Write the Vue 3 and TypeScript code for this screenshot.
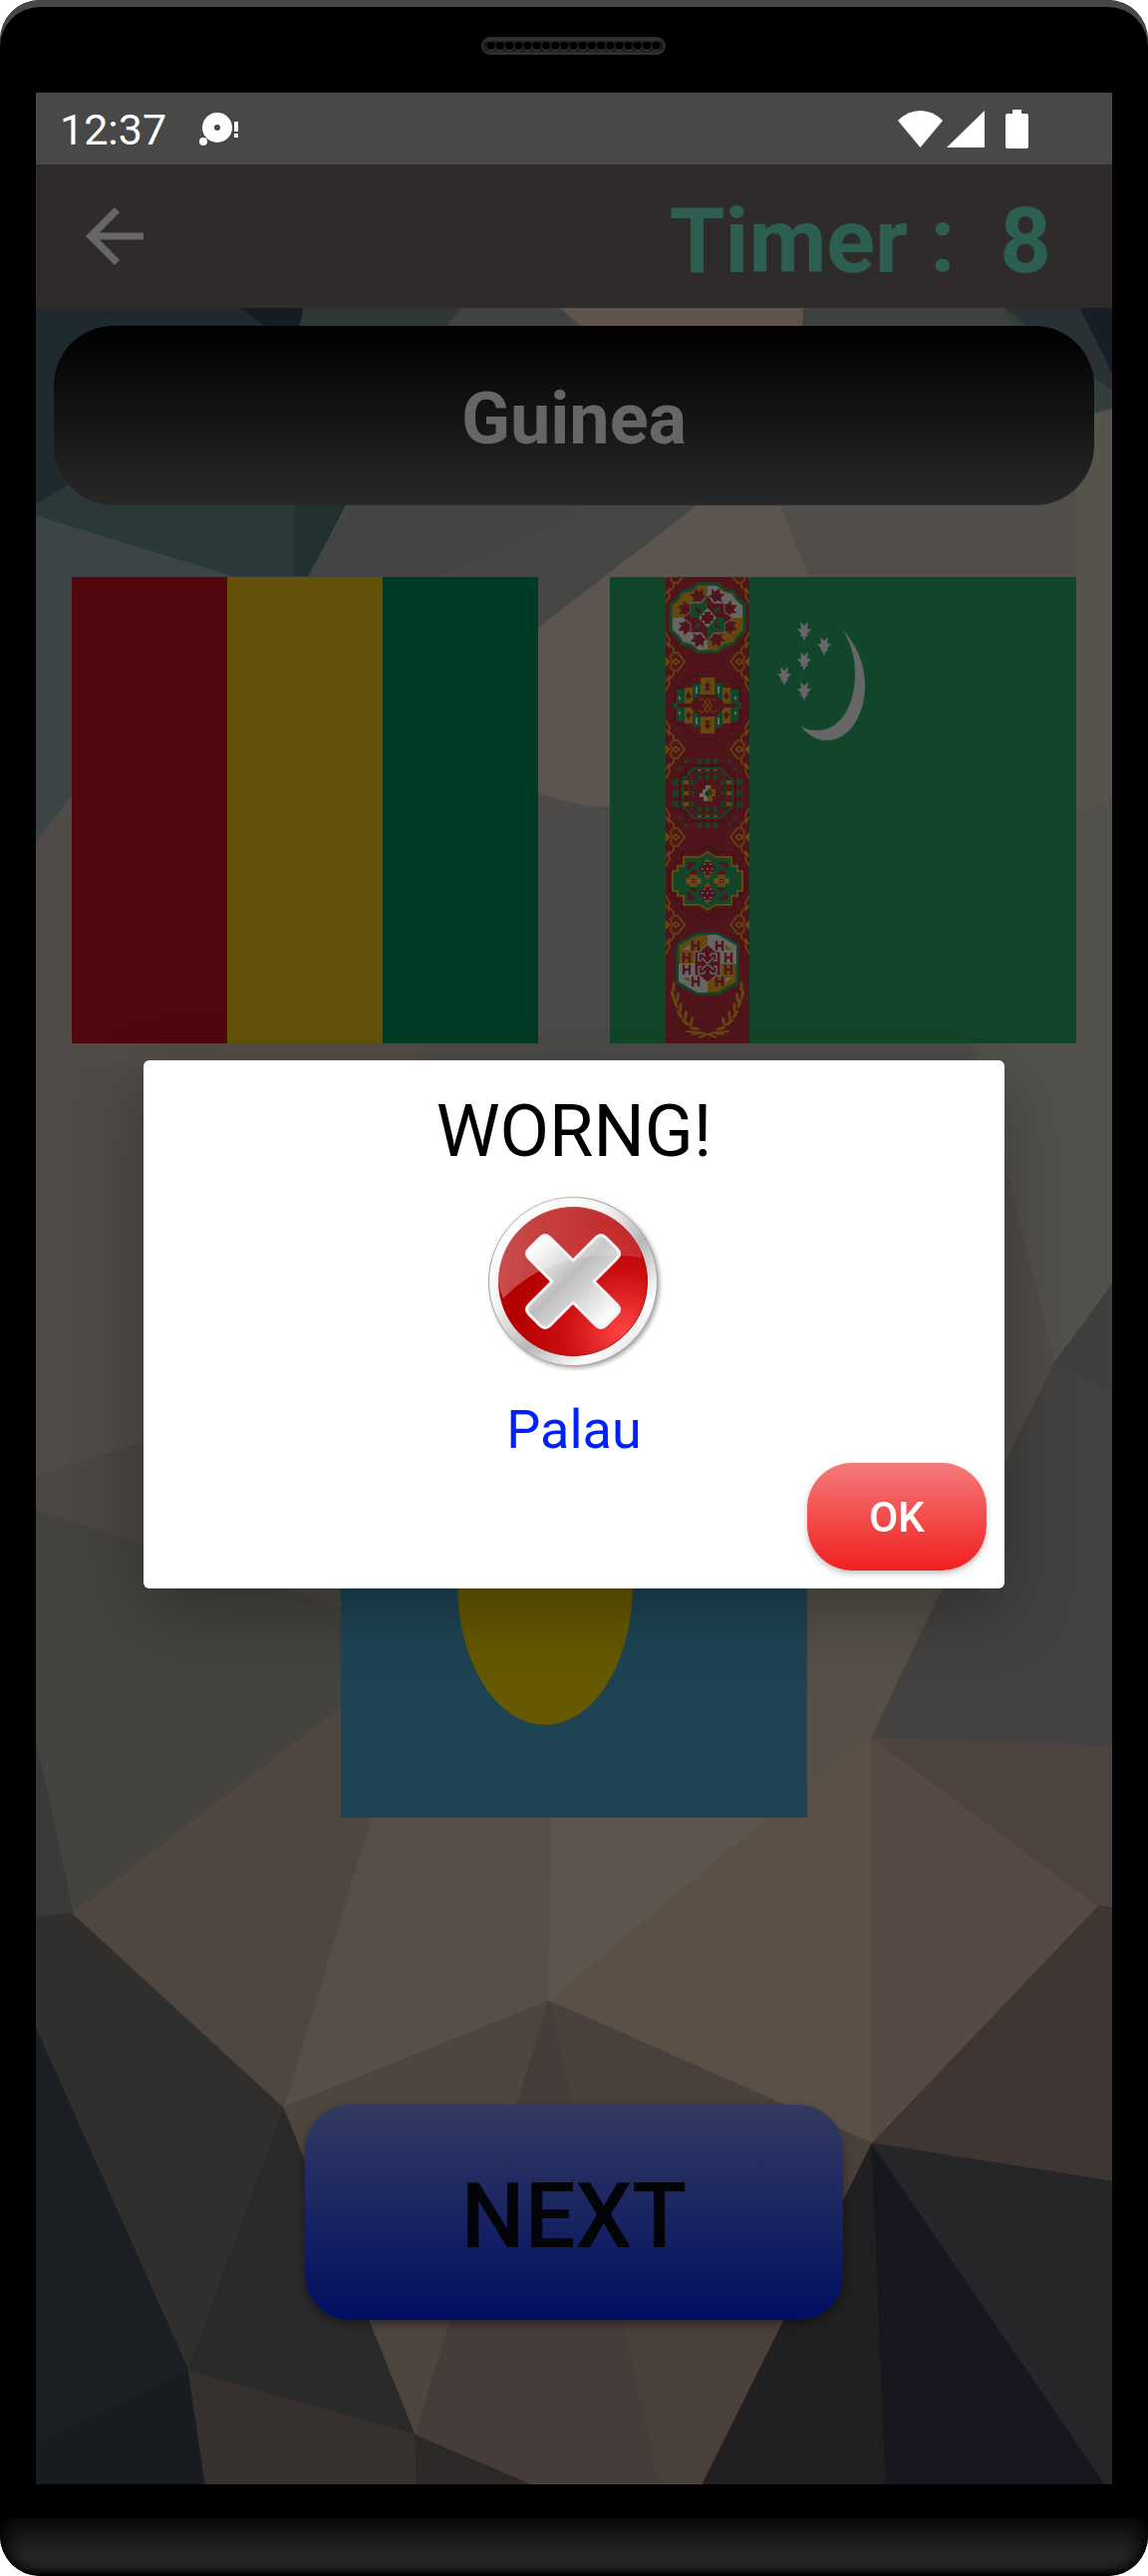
<script setup lang="ts">
import { ref } from 'vue'

interface Facet {
  points: string
  fill: string
}

const seconds = ref(8)
const country = ref('Guinea')
const picked = ref('Palau')

// Low-poly wallpaper, drawn from back to front.
const facets: Facet[] = [
  { points: '0,0 206,0 269,20 160,120 32,178 0,197', fill: '#1f2a2f' },
  { points: '206,0 269,0 260,40', fill: '#141c24' },
  { points: '269,0 427,0 380,60 260,40', fill: '#303736' },
  { points: '427,0 526,0 600,80 380,60', fill: '#404340' },
  { points: '526,0 771,0 760,120 600,60', fill: '#5f534c' },
  { points: '771,0 971,0 1060,110 1000,198 760,120', fill: '#3e413f' },
  { points: '971,0 1048,0 1080,64 1080,94', fill: '#293134' },
  { points: '1048,0 1080,0 1080,64', fill: '#161e27' },
  { points: '971,0 1080,84 1080,104 1040,110', fill: '#353d3d' },
  { points: '0,197 32,178 160,120 260,198 260,270 199,270 0,209', fill: '#2a3839' },
  { points: '260,180 320,180 273,270 260,270', fill: '#223032' },
  { points: '0,209 199,270 300,270 300,536 36,500 0,536', fill: '#3d4445' },
  { points: '315,198 664,198 504,321 273,270', fill: '#424543' },
  { points: '560,198 664,198 504,321 400,270', fill: '#454744' },
  { points: '664,198 747,198 776,270 900,500 504,500 504,321', fill: '#5b544f' },
  { points: '747,198 1044,110 1080,102 1080,495 1044,505 776,270', fill: '#514e49' },
  { points: '1044,110 1080,102 1080,495 1044,505', fill: '#56524c' },
  { points: '0,209 36,220 36,500 0,536', fill: '#3c4446' },
  { points: '0,536 36,490 108,700 108,1138 0,1173', fill: '#504b47' },
  { points: '504,488 576,506 576,740 504,740', fill: '#4c4b4a' },
  { points: '0,735 390,735 390,760 0,760', fill: '#524c48' },
  { points: '390,735 940,735 940,760 390,760', fill: '#4c4b47' },
  { points: '1044,505 1080,495 1080,980 1022,1059 940,735', fill: '#53514b' },
  { points: '940,735 1022,1059 909,1284 940,1290', fill: '#504c47' },
  { points: '1022,1059 1080,980 1080,1089', fill: '#403f3f' },
  { points: '1022,1059 1080,1089 1080,1443 838,1434', fill: '#434240' },
  { points: '0,1173 108,1138 306,1304 306,1404 37,1611 0,1441', fill: '#454340' },
  { points: '0,1173 108,1138 320,1270 306,1304 0,1205', fill: '#4b4743' },
  { points: '774,1270 909,1284 838,1434 735,1515 774,1400', fill: '#565049' },
  { points: '0,1441 37,1611 0,1615', fill: '#3b3a3b' },
  { points: '0,1615 37,1611 249,1806 153,2070 0,1727', fill: '#312f2e' },
  { points: '0,1727 153,2070 0,2145', fill: '#1b1f23' },
  { points: '0,2145 153,2070 170,2184 0,2184', fill: '#181b20' },
  { points: '249,1806 153,2070 381,2134', fill: '#292a29' },
  { points: '153,2070 381,2134 383,2184 170,2184', fill: '#36302e' },
  { points: '381,2134 498,2184 383,2184', fill: '#2d2928' },
  { points: '37,1611 306,1404 337,1515 249,1806', fill: '#4f4640' },
  { points: '249,1806 337,1515 518,1515 515,1699', fill: '#564e49' },
  { points: '518,1515 735,1515 515,1699', fill: '#5d564f' },
  { points: '515,1699 735,1515 838,1434 839,1842', fill: '#5a5046' },
  { points: '838,1434 1066,1604 839,1842', fill: '#564b44' },
  { points: '838,1434 1080,1443 1080,1605 1066,1604', fill: '#4d443f' },
  { points: '1066,1604 1080,1605 1080,1880 839,1842', fill: '#3f3633' },
  { points: '249,1806 515,1699 381,2134', fill: '#4e453f' },
  { points: '515,1699 625,2184 498,2184 381,2134', fill: '#463c3a' },
  { points: '515,1699 839,1842 669,2184 625,2184', fill: '#4a403b' },
  { points: '839,1842 853,2184 669,2184', fill: '#202023' },
  { points: '839,1842 1073,2184 853,2184', fill: '#17181f' },
  { points: '839,1842 1080,1880 1080,2184 1073,2184', fill: '#262628' }
]

const borderRows = [-3, 85, 173, 261, 349]
const stars = [[195, 54], [215, 69], [195, 84], [175, 99], [195, 114]]
const petals = [0, 45, 90, 135, 180, 225, 270, 315]
const offsets = [-8, 0, 8]
const rows = [-11, 0, 11]
const sides = [-1, 1]

// Leaves along one branch of the wreath: x, y, rotation.
const leaves = [
  [-34, 411, 0], [-35, 419, -14], [-30, 422, 12], [-32, 428, -22], [-27, 432, 4],
  [-28, 439, -34], [-22, 440, 8], [-22, 447, -52], [-16, 446, 14], [-13, 453, -78], [-12, 458, -96]
]

const octagonMarks = [
  [-12, -18], [-21, -6], [-21, 6], [-12, 18],
  [12, -18], [21, -6], [21, 6], [12, 18]
]
</script>

<template>
  <div class="phone">
    <header class="earpiece">
      <svg class="speaker" viewBox="0 0 185 18" aria-hidden="true">
        <defs>
          <linearGradient id="speakerRim" x1="0" y1="0" x2="0" y2="1">
            <stop offset="0" stop-color="#444" />
            <stop offset=".3" stop-color="#191919" />
            <stop offset=".8" stop-color="#191919" />
            <stop offset="1" stop-color="#383838" />
          </linearGradient>
        </defs>
        <rect x="1" y="1" width="183" height="16" rx="8" fill="url(#speakerRim)" stroke="#303030" stroke-width="2" />
        <g v-for="n in 19" :key="n">
          <circle :cx="n * 9.2 + 0.5" cy="10" r="4" fill="#484848" />
          <circle :cx="n * 9.2 + 0.5" cy="9" r="4" fill="#000" />
        </g>
      </svg>
    </header>

    <div class="screen">
      <div class="status">
        <time class="clock">12:37</time>
        <svg class="notice" width="40" height="36" viewBox="0 0 40 36" aria-hidden="true">
          <path fill="#fff" fill-rule="evenodd" d="M18 2a15 15 0 1 1 0 30a15 15 0 0 1 0-30zm0 12a3 3 0 1 0 0 6a3 3 0 0 0 0-6z" />
          <circle cx="4" cy="31" r="4" fill="#fff" />
          <path fill="#fff" d="M35 11h4v10h-4zM35 23h4v4h-4z" />
        </svg>
        <svg class="signals" width="132" height="40" viewBox="0 0 132 40" aria-hidden="true">
          <g fill="#fff">
            <path d="M0 12Q10 2 22.500 2T45 12L22.500 39z" />
            <path d="M49 39L87 2V39z" />
            <path d="M115 1h9v4h5q2 0 2 2v31q0 2-2 2h-19q-2 0-2-2V7q0-2 2-2h5z" />
          </g>
        </svg>
      </div>

      <div class="app">
        <div class="appbar">
          <button class="back" type="button" aria-label="Back">
            <svg width="58" height="58" viewBox="0 0 58 58">
              <path d="M58 25.500H14L34 5L29 0L0 29L29 58L34 53L14 32.500H58z" fill="#666" />
            </svg>
          </button>
          <h1 class="timer">Timer :&nbsp; {{ seconds }}</h1>
        </div>

        <main class="game">
          <svg class="wallpaper" viewBox="0 0 1080 2184" preserveAspectRatio="none" aria-hidden="true">
            <rect width="1080" height="2184" fill="#4c4945" />
            <polygon v-for="(f, i) in facets" :key="i" :points="f.points" :fill="f.fill" :stroke="f.fill" />
          </svg>

          <h2 class="country">{{ country }}</h2>

          <div class="flags">
            <button class="flag" type="button" aria-label="Flag 1">
              <svg viewBox="0 0 3 3" preserveAspectRatio="none">
                <rect width="3" height="3" fill="#003b25" />
                <rect width="2" height="3" fill="#65520a" />
                <rect width="1" height="3" fill="#52070e" />
              </svg>
            </button>

            <button class="flag" type="button" aria-label="Flag 2">
              <svg viewBox="0 0 468 468">
                <rect width="468" height="468" fill="#11462a" />
                <svg class="carpet" x="56" y="0" width="84" height="468" viewBox="-42 0 84 468">
                  <rect x="-42" width="84" height="468" fill="#4f151b" />

                  <g v-for="side in sides" :key="side" :transform="`scale(${side} 1)`">
                    <g v-for="y in borderRows" :key="y" :transform="`translate(-42 ${y})`" stroke="#65480f" stroke-width="1.600" fill="none">
                      <path d="M0-29L4-22L3-18L8-13V-9L5-6V-3M0-20L4-14M8-9H12L19 0L12 9H8M0 29L4 22L3 18L8 13V9L5 6V3M0 20L4 14" />
                      <path d="M5-3L10 3L14 0L10-3L5 3" />
                      <path d="M0-4L4 0L0 4z" fill="#65480f" />
                    </g>
                    <ellipse v-for="(l, i) in leaves" :key="i" rx="1.500" ry="5" fill="#65480f" :transform="`translate(${l[0]} ${l[1]}) rotate(${l[2]})`" />
                    <path d="M-22 456Q-6 456 9 462" fill="none" stroke="#65480f" stroke-width="2" />
                  </g>

                  <!-- first gul -->
                  <g transform="translate(0 41)">
                    <path d="M-10-34H10L17-28L26-26L30-19L37-13V13L30 19L26 26L17 28L10 34H-10L-17 28L-26 26L-30 19L-37 13V-13L-30-19L-26-26L-17-28z" fill="#65480f" stroke="#11462a" stroke-width="3" />
                    <path d="M0-32H9L16-26L24-24L28-18L35-12V0H0zM0 32H-9L-16 26L-24 24L-28 18L-35 12V0H0z" fill="#666" />
                    <g v-for="a in petals" :key="a" :transform="`rotate(${a + 22})`">
                      <path d="M0-32L3-27L7-29L5-23L8-20L3-20L0-17L-3-20L-8-20L-5-23L-7-29L-3-27z" fill="#4f151b" />
                    </g>
                    <path d="M0-23L6-15H17V-6L25 0L17 6V15H6L0 23L-6 15H-17V6L-25 0L-17-6V-15H-6z" fill="#4f151b" stroke="#666" />
                    <path d="M0-22V0H-17V-14H-6zM0 22V0H17V14H6z" fill="#11462a" />
                    <path d="M-12-10L-7-6M12 10L7 6" stroke="#4f151b" stroke-width="3" />
                    <path d="M12-10L7-6M-12 10L-7 6" stroke="#11462a" stroke-width="3" />
                    <path d="M0-10L9 0L0 10L-9 0z" fill="#666" />
                    <path d="M-3-6H3V-3H6V3H3V6H-3V3H-6V-3H-3z" fill="#4f151b" />
                  </g>

                  <!-- second gul -->
                  <g transform="translate(0 129)">
                    <path d="M-9-34H9V-30H17V-25H25V-18H33V18H25V25H17V30H9V34H-9V30H-17V25H-25V18H-33V-18H-25V-25H-17V-30H-9z" fill="none" stroke="#3a1014" />
                    <path d="M-31-16H-23V16H-31zM23-16H31V16H23zM-15-22H-7V22H-15zM7-22H15V22H7zM-34-3H34V3H-34z" fill="#11462a" />
                    <path d="M-23-18H-15V18H-23zM15-18H23V18H15zM-7-28H7V28H-7z" fill="#65480f" />
                    <path d="M-30-2H-17L-9-11H9L17-2H30V2H17L9 11H-9L-17 2H-30z" fill="#4f151b" />
                    <path d="M-9-5L-5-7L5 7L9 5M9-5L5-7L-5 7L-9 5M0-7L4 0L0 7L-4 0z" fill="none" stroke="#65480f" />
                    <path d="M0-24L3-20L1-18L3-15H-3L-1-18L-3-20zM0 24L3 20L1 18L3 15H-3L-1 18L-3 20zM-19-14L-16-9L-19-6L-22-9zM19-14L22-9L19-6L16-9zM-19 14L-16 9L-19 6L-22 9zM19 14L22 9L19 6L16 9z" fill="#4f151b" />
                    <path d="M-11-19V-12M11-19V-12M-11 19V12M11 19V12M-28-9V-6M28-9V-6M-28 9V6M28 9V6" stroke="#666" stroke-width="2" />
                  </g>

                  <!-- third gul -->
                  <g transform="translate(0 217)">
                    <path d="M-22-28H22V-18H28V18H22V28H-22V18H-28V-18H-22z" fill="none" stroke="#3a1014" />
                    <path d="M-13-25H13L25-13V13L13 25H-13L-25 13V-13z" fill="#4f151b" stroke="#11462a" stroke-width="2" />
                    <path d="M-12-21H12L19-12V12L12 21H-12L-19 12V-12z" fill="none" stroke="#11462a" />
                    <g v-for="o in offsets" :key="o">
                      <path :transform="`translate(${o} -32)`" d="M-2-2L2 2M2-2L-2 2" stroke="#11462a" stroke-width="2.400" />
                      <path :transform="`translate(${o} 32)`" d="M-2-2L2 2M2-2L-2 2" stroke="#11462a" stroke-width="2.400" />
                      <path :transform="`translate(${o} -16)`" d="M-2-2L2 2M2-2L-2 2" stroke="#11462a" stroke-width="2.400" />
                      <path :transform="`translate(${o} 16)`" d="M-2-2L2 2M2-2L-2 2" stroke="#11462a" stroke-width="2.400" />
                      <path :transform="`translate(${o} 0)`" d="M-2-23H2M-2 23H2" stroke="#65480f" stroke-width="2" />
                    </g>
                    <g v-for="r in rows" :key="r">
                      <path :transform="`translate(-32 ${r})`" d="M-3-3L3 3M3-3L-3 3" stroke="#11462a" stroke-width="2.400" />
                      <path :transform="`translate(32 ${r})`" d="M-3-3L3 3M3-3L-3 3" stroke="#11462a" stroke-width="2.400" />
                      <path :transform="`translate(0 ${r})`" d="M-24-2H-19V2H-24zM19-2H24V2H19z" fill="#65480f" />
                      <path :transform="`translate(0 ${r})`" d="M-17-2L-13 2M-13-2L-17 2M17-2L13 2M13-2L17 2" stroke="#11462a" stroke-width="2" />
                    </g>
                    <path d="M-29-23L-27-27M-23-30L-21-34M29-23L27-27M23-30L21-34M-29 23L-27 27M-23 30L-21 34M29 23L27 27M23 30L21 34" stroke="#11462a" stroke-width="2.400" />
                    <path d="M-8 0H-5V-4H-2V-8H2V-5L-3 0L0 4V8H-4V4H-8z" fill="#666" />
                    <path d="M8 0H5L2-4V-8H4V-4H8zM8 0V3H5V8H0V4L5 0z" fill="#65480f" />
                    <path d="M0-4V4L4 0z" fill="#11462a" />
                  </g>

                  <!-- fourth gul -->
                  <g transform="translate(0 305)">
                    <path d="M-26-29H26V-20H33V-12H38V12H33V20H26V29H-26V20H-33V12H-38V-12H-33V-20H-26zM-16-31L-12-36H-2L8-31M16-31L12-36H2L-8-31M-16 31L-12 36H-2L8 31M16 31L12 36H2L-8 31" fill="none" stroke="#3a1014" />
                    <path d="M-24-24H-8L0-29L8-24H24V-15H30V-10H35V10H30V15H24V24H8L0 29L-8 24H-24V15H-30V10H-35V-10H-30V-15H-24z" fill="#11462a" stroke="#65480f" stroke-width="2" />
                    <path d="M-20-19H-11L-20-10zM20-19H11L20-10zM-20 19H-11L-20 10zM20 19H11L20 10z" fill="#4f151b" />
                    <path d="M0-23L4-19V-6L0-1L-4-6V-19zM0 23L4 19V6L0 1L-4 6V19zM-18-6H-10V-3H-6V3H-10V6H-18V3H-22V-3H-18zM18-6H10V-3H6V3H10V6H18V3H22V-3H18z" fill="#65480f" />
                    <path d="M-5-19H5V-15H8V-10H5V-6H-5V-10H-8V-15H-5zM-5 19H5V15H8V10H5V6H-5V10H-8V15H-5zM-14-12L-9-7H-19zM14-12L19-7H9zM-14 12L-9 7H-19zM14 12L19 7H9zM-16-2H-12V2H-16zM12-2H16V2H12z" fill="#4f151b" />
                    <path d="M-4-17H-2M2-17H4M-6-12H-4M-1-12H1M4-12H6M-4-8H-2M2-8H4M-4 17H-2M2 17H4M-6 12H-4M-1 12H1M4 12H6M-4 8H-2M2 8H4M-20 0H-18M-15 0H-13M-10 0H-8M8 0H10M13 0H15M18 0H20" stroke="#666" stroke-width="1.500" />
                  </g>

                  <!-- fifth gul -->
                  <g transform="translate(0 388)">
                    <path d="M-10-30H10L30-19V19L10 30H-10L-30 19V-19z" fill="#65480f" stroke="#11462a" stroke-width="3" />
                    <path d="M0-29H10L29-18V0H0zM0 29H-10L-29 18V0H0z" fill="#666" />
                    <path d="M-25-14L-18-19V-14zM18 14H25L18 19z" fill="#666" />
                    <path d="M25-14L18-19V-14zM-18 14H-25L-18 19z" fill="#65480f" />
                    <path d="M0-19L8-12H13V12H8L0 19L-8 12H-13V-12H-8z" fill="#4f151b" stroke="#666" />
                    <path v-for="(m, i) in octagonMarks" :key="i" :transform="`translate(${m[0]} ${m[1]})`" d="M-3-5V5M3-5V5M-3 0H3" stroke="#4f151b" stroke-width="2.400" />
                    <path d="M-6-6L6 6M6-6L-6 6M-3-10H-9V-3H-6M3-10H9V-3H6M-3 10H-9V3H-6M3 10H9V3H6M-3-10V-7M3-10V-7M-3 10V7M3 10V7" fill="none" stroke="#666" stroke-width="1.500" />
                  </g>
                </svg>

                <path fill="#666" d="M233 52C248 68 256 88 256 108C256 141 239 164 217 164C207 164 198 158 192 150C197 153 203 154 208 154C231 154 246 130 246 96C246 80 241 64 233 52z" />
                <path v-for="(s, i) in stars" :key="i" fill="#666" :transform="`translate(${s[0]} ${s[1]})`" d="M-4-9L0-5L4-9L3-2H7L3 3L4 6L2 5L0 10L-2 5L-4 6L-3 3L-7-2H-3z" />
              </svg>
            </button>

            <button class="flag" type="button" aria-label="Flag 3">
              <svg viewBox="0 0 468 468">
                <rect width="468" height="468" fill="#1e4454" />
                <ellipse cx="205" cy="234" rx="88" ry="141" fill="#665900" />
              </svg>
            </button>
          </div>

          <button class="next" type="button">NEXT</button>
        </main>

        <div class="overlay">
          <section class="dialog" role="dialog" aria-labelledby="verdict">
            <h2 id="verdict" class="verdict">WORNG!</h2>
            <svg class="cross" width="180" height="180" viewBox="0 0 180 180" aria-hidden="true">
              <defs>
                <linearGradient id="ring" x1=".15" y1=".1" x2=".9" y2=".9">
                  <stop offset="0" stop-color="#fff" />
                  <stop offset=".3" stop-color="#f4f4f4" />
                  <stop offset=".58" stop-color="#b8b8b8" />
                  <stop offset=".85" stop-color="#fff" />
                  <stop offset="1" stop-color="#ddd" />
                </linearGradient>
                <radialGradient id="disc" cx=".84" cy=".84" r=".75">
                  <stop offset="0" stop-color="#ff4444" />
                  <stop offset=".55" stop-color="#c90d10" />
                  <stop offset="1" stop-color="#b30000" />
                </radialGradient>
                <linearGradient id="gloss" x1="0" y1="0" x2="1" y2="0">
                  <stop offset="0" stop-color="#fff" stop-opacity=".3" />
                  <stop offset="1" stop-color="#fff" stop-opacity=".14" />
                </linearGradient>
                <linearGradient id="steel" x1=".1" y1=".1" x2=".9" y2=".9">
                  <stop offset="0" stop-color="#fff" />
                  <stop offset=".45" stop-color="#bdbdbd" />
                  <stop offset=".6" stop-color="#cfcfcf" />
                  <stop offset="1" stop-color="#fff" />
                </linearGradient>
                <filter id="soft" x="-10%" y="-10%" width="120%" height="120%">
                  <feGaussianBlur stdDeviation="2" />
                </filter>
              </defs>
              <g transform="translate(-1 0)">
                <circle cx="92" cy="92" r="85" fill="#000" opacity=".35" filter="url(#soft)" />
                <circle cx="90" cy="90" r="84.500" fill="url(#ring)" stroke="#a5a5a5" />
                <circle cx="90" cy="90" r="74.500" fill="url(#disc)" stroke="#b80808" />
                <path d="M57 46Q62 41 67 46L90 69L113 46Q118 41 123 46L134 57Q139 62 134 67L111 90L134 113Q139 118 134 123L123 134Q118 139 113 134L90 111L67 134Q62 139 57 134L46 123Q41 118 46 113L69 90L46 67Q41 62 46 57z" fill="url(#steel)" stroke="#f2f2f2" stroke-width="3" />
                <path d="M20 107A73 73 0 1 1 159 66Q70 54 20 107z" fill="url(#gloss)" />
              </g>
            </svg>
            <p class="picked">{{ picked }}</p>
            <button class="ok" type="button">OK</button>
          </section>
        </div>
      </div>
    </div>

    <footer class="chin"></footer>
  </div>
</template>

<style>
body {
  margin: 0;
  background: #fff;
}
</style>

<style scoped>
.phone {
  display: flex;
  flex-direction: column;
  min-height: 100vh;
  overflow: hidden;
  border-radius: 40px;
  background: #000;
  font-family: Roboto, "Liberation Sans", sans-serif;
}

.phone * {
  box-sizing: border-box;
}

button {
  padding: 0;
  border: 0;
  background: none;
  font-family: inherit;
  cursor: pointer;
}

h1,
h2,
p {
  margin: 0;
}

.earpiece {
  display: flex;
  justify-content: center;
  height: 93px;
  padding: 37px 2px 0 0;
  border-radius: 40px 40px 0 0;
  box-shadow: inset 0 7px 0 #484848;
}

.speaker {
  width: 185px;
  height: 18px;
}

.screen {
  display: flex;
  flex: 1;
  flex-direction: column;
  margin: 0 36px;
}

.status {
  display: flex;
  align-items: center;
  height: 72px;
  padding: 0 83px 0 24px;
  background: #484848;
  color: #fff;
}

.clock {
  padding-top: 2px;
  font-size: 43px;
  line-height: 70px;
}

.notice {
  margin-left: 33px;
}

.signals {
  margin-left: auto;
}

.app {
  position: relative;
  display: flex;
  flex: 1;
  flex-direction: column;
}

.appbar {
  display: flex;
  align-items: center;
  justify-content: space-between;
  height: 144px;
  padding: 0 61px 0 50px;
  background: #2f2b2a;
}

.back svg {
  display: block;
}

.timer {
  padding-top: 12px;
  color: #2c5e52;
  font-size: 90px;
  font-weight: 700;
  line-height: 108px;
}

.game {
  position: relative;
  display: flex;
  flex: 1;
  flex-direction: column;
  align-items: center;
  padding: 18px 18px 165px;
}

.wallpaper {
  position: absolute;
  inset: 0;
  width: 100%;
  height: 100%;
}

.country,
.flags,
.next {
  position: relative;
}

.country {
  width: 100%;
  height: 180px;
  padding-top: 4px;
  border-radius: 60px;
  background: linear-gradient(#000, #282828);
  color: #666;
  font-size: 72px;
  font-weight: 700;
  line-height: 180px;
  text-align: center;
}

.flags {
  display: flex;
  flex-wrap: wrap;
  justify-content: center;
  gap: 309px 72px;
  width: 100%;
  margin-top: 72px;
  padding: 0 18px;
}

.flag {
  width: calc(50% - 36px);
  aspect-ratio: 1;
}

.flag > svg {
  display: block;
  width: 100%;
  height: 100%;
}

.next {
  width: 540px;
  max-width: 100%;
  height: 216px;
  margin-top: 288px;
  padding-top: 9px;
  border-radius: 45px;
  background: linear-gradient(#333a60, #000f63);
  box-shadow: 0 4px 8px rgba(0, 0, 0, 0.4);
  color: #030408;
  font-size: 90px;
  font-weight: 500;
}

.overlay {
  position: absolute;
  inset: 0;
  display: flex;
  align-items: center;
  justify-content: center;
  overflow: hidden;
}

.dialog {
  display: flex;
  flex-direction: column;
  align-items: center;
  width: 80%;
  padding: 18px;
  border-radius: 6px;
  background: #fff;
  box-shadow: 0 24px 72px rgba(0, 0, 0, 0.3);
}

.verdict {
  padding-top: 12px;
  color: #000;
  font-size: 72px;
  font-weight: 400;
  line-height: 84px;
}

.cross {
  margin-top: 18px;
}

.picked {
  margin-top: 26px;
  color: #0021ff;
  font-size: 54px;
  line-height: 66px;
}

.ok {
  align-self: flex-end;
  width: 180px;
  height: 108px;
  border-radius: 45px;
  background: linear-gradient(#f57a7a, #f02020);
  box-shadow: 0 3px 6px rgba(0, 0, 0, 0.25);
  color: #fff;
  font-size: 42px;
  font-weight: 500;
}

.chin {
  height: 58px;
  margin-top: 34px;
  border-radius: 0 0 40px 40px;
  background: linear-gradient(#0b0b0b, #262626 65%, #202020 85%, #000);
  box-shadow: inset 14px 0 16px -8px #000, inset -14px 0 16px -8px #000;
}
</style>
